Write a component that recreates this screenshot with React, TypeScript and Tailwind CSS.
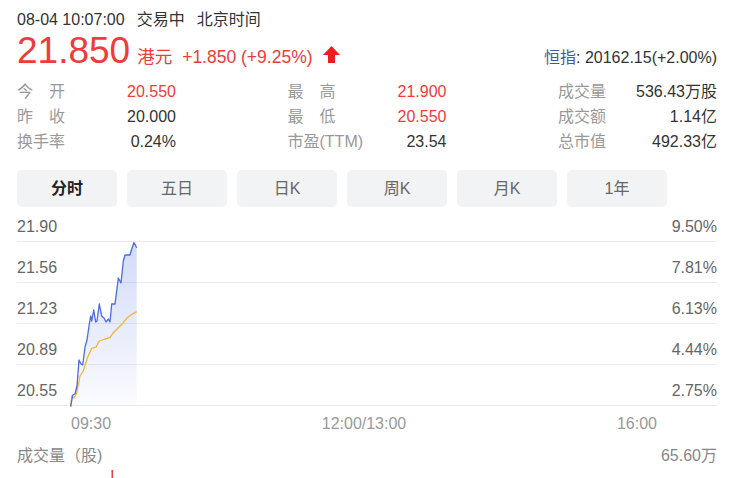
import React from "react"

const RED = "#ee3b3b"

const stats = [
  [
    { label: "今开", value: "20.550", red: true },
    { label: "最高", value: "21.900", red: true },
    { label: "成交量", value: "536.43万股", red: false },
  ],
  [
    { label: "昨收", value: "20.000", red: false },
    { label: "最低", value: "20.550", red: true },
    { label: "成交额", value: "1.14亿", red: false },
  ],
  [
    { label: "换手率", value: "0.24%", red: false },
    { label: "市盈(TTM)", value: "23.54", red: false },
    { label: "总市值", value: "492.33亿", red: false },
  ],
]

const tabs = ["分时", "五日", "日K", "周K", "月K", "1年"]

const grid = [
  ["21.90", "9.50%"],
  ["21.56", "7.81%"],
  ["21.23", "6.13%"],
  ["20.89", "4.44%"],
  ["20.55", "2.75%"],
]

// points in page coordinates, shifted into the chart box below
const pricePts = [
  [70.7, 405.5], [72.7, 394], [75, 393], [77, 385], [79, 359], [81, 363], [82.7, 364],
  [85, 346], [87, 339], [89.3, 323], [90.7, 315], [91.7, 320], [93.7, 309], [95.7, 321],
  [97, 320], [99.3, 303], [101.7, 315], [104, 317], [106, 321], [108.3, 318], [110, 321],
  [111.7, 303], [115, 303], [118.3, 277], [121, 282], [123.3, 260], [125, 254], [130, 254],
  [131.7, 248], [134, 241.5], [136.7, 246.7],
]

const avgPts = [
  [70.7, 406], [71.7, 395], [74, 397], [76.7, 392], [80, 375], [83.3, 370], [87.3, 357],
  [91.7, 347.3], [96, 346], [99.3, 340], [105, 338], [110, 336.7], [113.3, 331.7],
  [118.3, 326.7], [123.3, 321.7], [126.7, 317.3], [131.7, 313.3], [136.7, 310.7],
]

const toPath = (pts: number[][]) =>
  pts.map(([x, y], i) => `${i === 0 ? "M" : "L"}${(x - 17).toFixed(1)},${(y - 206).toFixed(1)}`).join(" ")

function Label({ text }: { text: string }) {
  if (text.length === 2) {
    return (
      <span className="flex w-[48px] justify-between text-[#999]">
        <span>{text[0]}</span>
        <span>{text[1]}</span>
      </span>
    )
  }
  return <span className="text-[#999]">{text}</span>
}

function UpArrow() {
  return (
    <svg width="17" height="17" viewBox="0 0 17 17" className="ml-[10px]">
      <path d="M8.5 0 L17 9 L12 9 L12 17 L5 17 L5 9 L0 9 Z" fill="#f01e1e" />
    </svg>
  )
}

export default function App() {
  const fillPath = `${toPath(pricePts)} L${(136.7 - 17).toFixed(1)},199.5 L${(70.7 - 17).toFixed(1)},199.5 Z`

  return (
    <div className="h-[478px] w-[744px] overflow-hidden bg-white pl-[17px] pr-[27px] text-[16px] text-[#333] font-['Liberation_Sans','Noto_Sans_CJK_SC',sans-serif]">
      <div className="mt-[10px] flex h-[20px] items-center gap-[12px] leading-[20px]">
        <span>08-04 10:07:00</span>
        <span>交易中</span>
        <span>北京时间</span>
      </div>

      <div className="mt-[2px] flex items-baseline justify-between">
        <div className="flex items-baseline">
          <span className="text-[37px] leading-[37px]" style={{ color: RED }}>21.850</span>
          <span className="ml-[7px] text-[17.5px]" style={{ color: RED }}>港元</span>
          <span className="ml-[10px] text-[17.5px]" style={{ color: RED }}>+1.850 (+9.25%)</span>
          <UpArrow />
        </div>
        <div>
          <span className="text-[#3d5aa6]">恒指</span>
          <span>: 20162.15(+2.00%)</span>
        </div>
      </div>

      <div className="mt-[9px]">
        {stats.map((row, r) => (
          <div key={r} className="flex h-[25px] items-center justify-between leading-[20px]">
            {row.map((s) => (
              <div key={s.label} className="flex w-[159px] items-center justify-between">
                <Label text={s.label} />
                <span className={s.red ? "text-[#ee3b3b]" : "text-[#333]"}>{s.value}</span>
              </div>
            ))}
          </div>
        ))}
      </div>

      <div className="mt-[16px] flex gap-[10px]">
        {tabs.map((t, i) => (
          <div
            key={t}
            className={
              i === 0
                ? "flex h-[37px] w-[100px] items-center justify-center rounded-[5px] bg-[#f2f3f5] font-bold text-[#222]"
                : "flex h-[37px] w-[100px] items-center justify-center rounded-[5px] bg-[#f2f3f5] text-[#666]"
            }
          >
            {t}
          </div>
        ))}
      </div>

      <div className="relative">
        {grid.map(([l, r], i) => (
          <div
            key={l}
            className={
              i === 0
                ? "flex h-[35px] items-end justify-between border-b border-[#ececec] pb-[4px] leading-[20px] text-[#666]"
                : "flex h-[41px] items-end justify-between border-b border-[#ececec] pb-[4px] leading-[20px] text-[#666]"
            }
          >
            <span>{l}</span>
            <span>{r}</span>
          </div>
        ))}
        <svg className="pointer-events-none absolute left-0 top-0" width="700" height="200" viewBox="0 0 700 200">
          <defs>
            <linearGradient id="area" x1="0" y1="35" x2="0" y2="200" gradientUnits="userSpaceOnUse">
              <stop offset="0" stopColor="#4b6be0" stopOpacity="0.25" />
              <stop offset="1" stopColor="#4b6be0" stopOpacity="0.02" />
            </linearGradient>
          </defs>
          <path d={fillPath} fill="url(#area)" />
          <path d={toPath(avgPts)} fill="none" stroke="#f2b632" strokeWidth="1.3" strokeLinejoin="round" />
          <path d={toPath(pricePts)} fill="none" stroke="#4b6be0" strokeWidth="1.3" strokeLinejoin="round" />
        </svg>
      </div>

      <div className="mt-[8px] flex h-[20px] items-center justify-between pl-[54px] pr-[60px] leading-[20px] text-[#999]">
        <span>09:30</span>
        <span>12:00/13:00</span>
        <span>16:00</span>
      </div>

      <div className="mt-[12px] flex h-[20px] items-center justify-between leading-[20px] text-[#888]">
        <span>成交量（股)</span>
        <span>65.60万</span>
      </div>

      <svg width="700" height="12" viewBox="0 0 700 12" className="block">
        <rect x="94.5" y="4" width="1.5" height="8" fill="#ee3b3b" />
      </svg>
    </div>
  )
}
